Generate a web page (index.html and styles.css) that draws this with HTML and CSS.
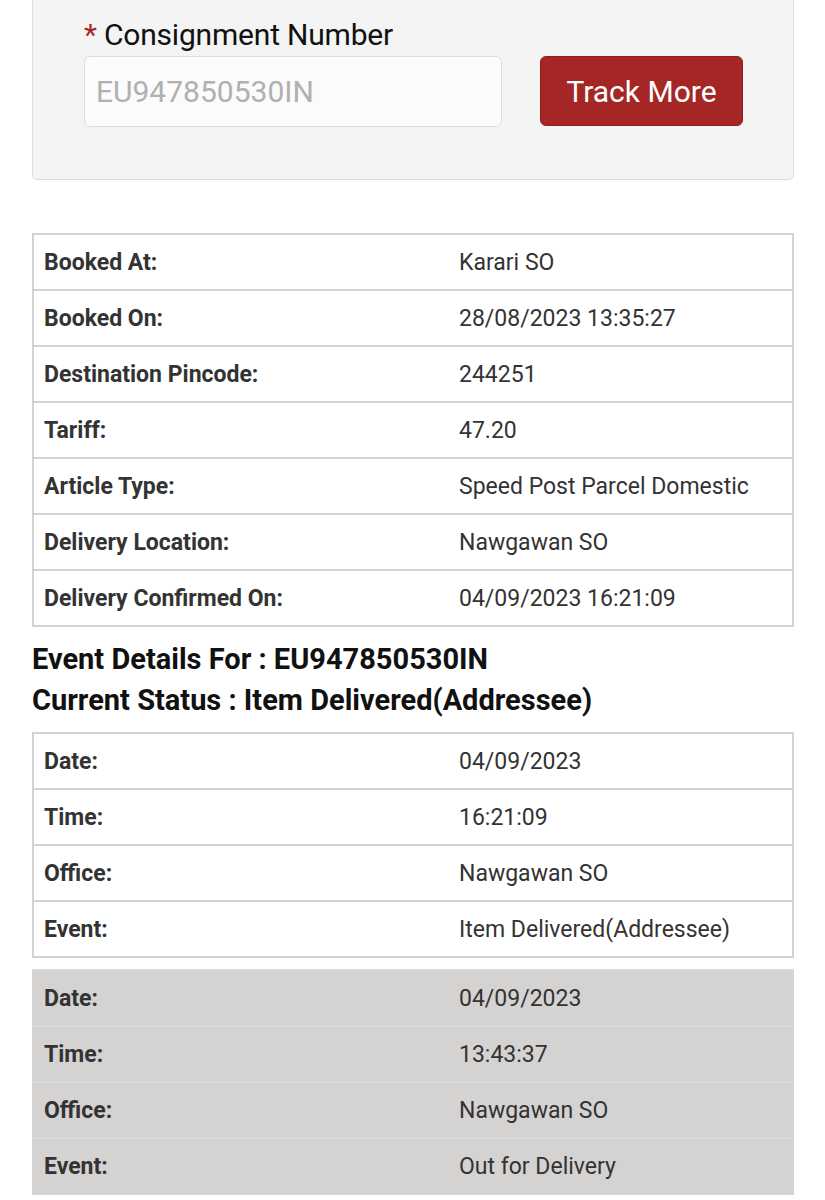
FILE: index.html
```html
<!DOCTYPE html>
<html>
<head>
<meta charset="utf-8">
<link rel="stylesheet" href="styles.css">
</head>
<body>
<div class="page">
  <div class="search-panel">
    <label class="field-label"><span class="req">*</span> Consignment Number</label>
    <div class="search-row">
      <input class="cn-input" type="text" placeholder="EU947850530IN">
      <button class="track-btn">Track More</button>
    </div>
  </div>

  <table class="info">
    <tr><th>Booked At:</th><td>Karari SO</td></tr>
    <tr><th>Booked On:</th><td>28/08/2023 13:35:27</td></tr>
    <tr><th>Destination Pincode:</th><td>244251</td></tr>
    <tr><th>Tariff:</th><td>47.20</td></tr>
    <tr><th>Article Type:</th><td>Speed Post Parcel Domestic</td></tr>
    <tr><th>Delivery Location:</th><td>Nawgawan SO</td></tr>
    <tr><th>Delivery Confirmed On:</th><td>04/09/2023 16:21:09</td></tr>
  </table>

  <h2 class="event-title">Event Details For : EU947850530IN</h2>
  <h2 class="event-title">Current Status : Item Delivered(Addressee)</h2>

  <table class="info event">
    <tr><th>Date:</th><td>04/09/2023</td></tr>
    <tr><th>Time:</th><td>16:21:09</td></tr>
    <tr><th>Office:</th><td>Nawgawan SO</td></tr>
    <tr><th>Event:</th><td>Item Delivered(Addressee)</td></tr>
  </table>

  <table class="info event shaded">
    <tr><th>Date:</th><td>04/09/2023</td></tr>
    <tr><th>Time:</th><td>13:43:37</td></tr>
    <tr><th>Office:</th><td>Nawgawan SO</td></tr>
    <tr><th>Event:</th><td>Out for Delivery</td></tr>
  </table>
</div>
</body>
</html>
```

FILE: styles.css
```css
html, body {
  margin: 0;
  padding: 0;
  background: #ffffff;
}

body {
  font-family: Roboto, "Noto Sans", "Liberation Sans", sans-serif;
  color: #333333;
}

.page {
  width: 762px;
  margin-left: 32px;
}

.search-panel {
  background: #f4f4f4;
  border: 1px solid #dddddd;
  border-top: none;
  border-radius: 0 0 5px 5px;
  padding: 18px 50px 52px 51px;
  box-sizing: border-box;
  height: 180px;
}

.field-label {
  display: block;
  font-size: 30px;
  line-height: 34px;
  color: #111111;
  letter-spacing: -0.2px;
}

.req {
  color: #a52725;
}

.search-row {
  display: flex;
  align-items: flex-start;
  gap: 38px;
  margin-top: 4px;
}

.cn-input {
  width: 418px;
  height: 71px;
  box-sizing: border-box;
  background: #fbfbfb;
  border: 1.5px solid #dddddd;
  border-radius: 6px;
  padding: 0 11px;
  font-family: Roboto, "Noto Sans", sans-serif;
  font-size: 30px;
  color: #555;
  outline: none;
}

.cn-input::placeholder {
  color: #b0b0b0;
}

.track-btn {
  width: 203px;
  height: 70px;
  background: #a52725;
  border: 1px solid #8e1f1e;
  border-radius: 6px;
  color: #ffffff;
  font-family: Roboto, "Noto Sans", sans-serif;
  font-size: 30px;
  padding: 0;
}

.info {
  width: 762px;
  border-collapse: collapse;
  border: 2px solid #d2d2d2;
  margin-top: 53px;
}

.info th,
.info td {
  height: 54px;
  padding: 0 10px;
  border-top: 2px solid #d2d2d2;
  text-align: left;
  font-size: 23px;
  color: #333333;
  vertical-align: middle;
}

.info th {
  width: 395px;
  font-weight: bold;
}

.info td {
  font-weight: normal;
}

.event-title {
  margin: 0;
  font-size: 29px;
  line-height: 41px;
  font-weight: bold;
  color: #111111;
}

.info + .event-title {
  margin-top: 12px;
}

.info.event {
  margin-top: 11px;
}

.info.shaded {
  margin-top: 11px;
  background: #d5d2d2;
  border-color: #d6d3d3;
}

.info.shaded th,
.info.shaded td {
  border-top-color: #dcd9d9;
}
```
